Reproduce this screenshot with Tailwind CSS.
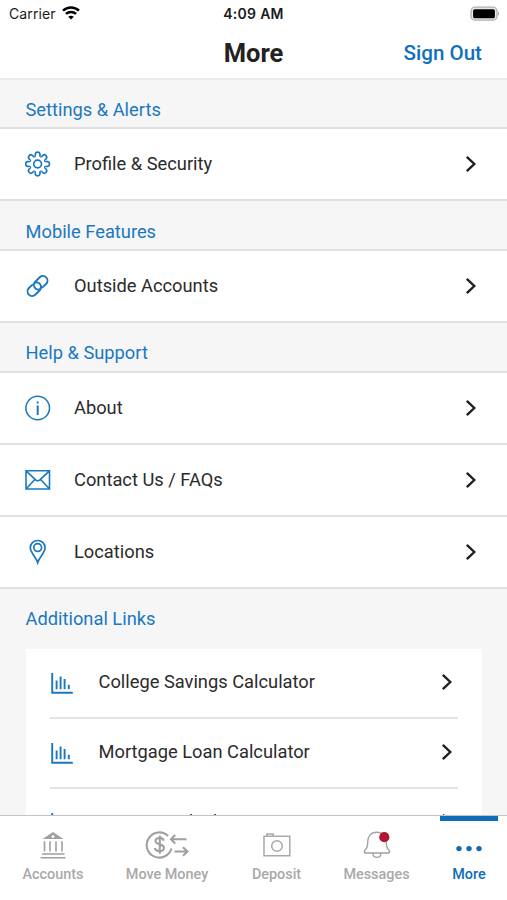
<!DOCTYPE html>
<html lang="en">
<head>
<meta charset="utf-8">
<title>More</title>
<script src="https://cdn.jsdelivr.net/npm/@tailwindcss/browser@4"></script>
</head>
<body class="w-[507px] h-[900px] overflow-hidden bg-[#f6f6f6] font-['Roboto',sans-serif] text-[#2b2b2b]">
<svg class="hidden">
  <symbol id="chev" viewBox="0 0 12 18"><path d="M1.8 1.8 9.3 9 1.8 16.2" fill="none" stroke="#202020" stroke-width="2.4"/></symbol>
  <symbol id="chart" viewBox="0 0 24 24"><path d="M2.2 1v19.8h20.6M6.6 8.6V17.2M10.6 4.4V17.2M14.6 7V17.2M18.8 12.8v4.4" fill="none" stroke="#1a78c0" stroke-width="1.9"/></symbol>
</svg>
<div class="flex h-full flex-col">
  <header class="h-[80px] shrink-0 border-b-2 border-[#ebebeb] bg-white">
    <div class="grid h-7 grid-cols-3 items-center pl-[9px] pr-[7px] font-['Inter',sans-serif] text-[14px] text-[#1a1a1a]">
      <div class="-mt-px flex items-center gap-[6px]"><span class="w-[47px] tracking-[0.1px]">Carrier</span>
        <svg class="-mt-[2px] h-[14px] w-[18px]" viewBox="0 0 18 14" fill="none" stroke="#000" stroke-width="2.5"><path d="M1 4.7C5.5.4 12.5.4 17 4.7"/><path d="M3.9 7.9C6.8 5.2 11.2 5.2 14.1 7.9"/><path d="M9 13.6 6.2 10.8Q9 8.5 11.8 10.8Z" fill="#000" stroke="none"/></svg>
      </div>
      <span class="-ml-[2px] -mt-[1px] text-center font-semibold tracking-[0.3px]">4:09 AM</span>
      <svg class="-mt-[1px] h-4 w-[31px] justify-self-end" viewBox="0 0 31 16"><rect x="2" y="1.2" width="26" height="13" rx="4" fill="#e8e8e8" stroke="#b0b0b0" stroke-width="1.3"/><rect x="4.1" y="3.2" width="21.8" height="9" rx="1.5"/><path d="M29 5.3q2 2.4 0 4.8z" fill="#aaa"/></svg>
    </div>
    <div class="grid h-[50px] grid-cols-3 items-center px-[25px]">
      <span></span>
      <h1 class="text-center text-[25.5px] font-bold text-[#222]">More</h1>
      <a class="text-right text-[20.6px] font-medium text-[#0f70bd]">Sign Out</a>
    </div>
  </header>
  <main class="min-h-0 flex-1 overflow-hidden text-[18.3px]">
    <h2 class="h-[49px] border-b-2 border-[#e0e0e0] pl-[25.5px] pt-[12px] leading-[36px] text-[#1a78c0]">Settings &amp; Alerts</h2>
    <div class="flex h-[72px] items-center border-b-2 border-[#e0e0e0] bg-white pl-[25px] pr-[30px]">
      <svg class="h-[26px] w-[26px]" viewBox="-12.6 -13 26 26" fill="none" stroke="#1a78c0" stroke-width="1.7"><circle r="3.9"/>
        <g><path id="t" d="M-3.1-7.5C-2.3-7.2-2.4-8.8-2.3-10.2C-2.1-11.6-1.2-11.9 0-11.9C1.2-11.9 2.1-11.6 2.3-10.2C2.4-8.8 2.3-7.2 3.1-7.5"/><use href="#t" transform="rotate(45)"/><use href="#t" transform="rotate(90)"/><use href="#t" transform="rotate(135)"/><use href="#t" transform="rotate(180)"/><use href="#t" transform="rotate(225)"/><use href="#t" transform="rotate(270)"/><use href="#t" transform="rotate(315)"/></g></svg>
      <span class="ml-[23px] flex-1">Profile &amp; Security</span><svg class="h-[18px] w-3"><use href="#chev"/></svg>
    </div>
    <h2 class="h-[50px] border-b-2 border-[#e0e0e0] pl-[25.5px] pt-[12px] leading-[37px] text-[#1a78c0]">Mobile Features</h2>
    <div class="flex h-[72px] items-center border-b-2 border-[#e0e0e0] bg-white pl-[25px] pr-[30px]">
      <svg class="h-[26px] w-[26px]" viewBox="0 0 26 26" fill="none" stroke="#1a78c0" stroke-width="1.9" stroke-linecap="round"><path id="lk" d="M14.3 16.5A4.6 4.6 0 0 1 10.25 8.75L14.75 4.25A4.6 4.6 0 0 1 21.25 10.75L17.8 14.2"/><use href="#lk" transform="rotate(180 12.5 13)"/></svg>
      <span class="ml-[23px] flex-1">Outside Accounts</span><svg class="h-[18px] w-3"><use href="#chev"/></svg>
    </div>
    <h2 class="h-[50px] border-b-2 border-[#e0e0e0] pl-[25.5px] pt-[12px] leading-[36px] text-[#1a78c0]">Help &amp; Support</h2>
    <div class="flex h-[72px] items-center border-b-2 border-[#e0e0e0] bg-white pl-[25px] pr-[30px]">
      <svg class="h-[26px] w-[26px]" viewBox="0 0 26 26" fill="none" stroke="#1a78c0" stroke-width="1.5"><circle cx="12.7" cy="13" r="11.8"/><path d="M12.7 10.5v9.5M12.7 6.5v2" stroke-width="2"/></svg>
      <span class="ml-[23px] flex-1">About</span><svg class="h-[18px] w-3"><use href="#chev"/></svg>
    </div>
    <div class="flex h-[72px] items-center border-b-2 border-[#e0e0e0] bg-white pl-[25px] pr-[30px]">
      <svg class="h-[26px] w-[26px]" viewBox="0 0 26 26" fill="none" stroke="#1a78c0" stroke-width="1.6"><path d="M1 3.8H24.5V22H1ZM1 3.8 10.9 13.2Q12.7 14.5 14.6 13.2L24.5 3.8M1 22 9.8 12.5M24.5 22 15.7 12.5"/></svg>
      <span class="ml-[23px] flex-1">Contact Us / FAQs</span><svg class="h-[18px] w-3"><use href="#chev"/></svg>
    </div>
    <div class="flex h-[72px] items-center border-b-2 border-[#e0e0e0] bg-white pl-[25px] pr-[30px]">
      <svg class="h-[26px] w-[26px]" viewBox="0 0 26 26" fill="none" stroke="#1a78c0" stroke-width="1.7"><path d="M12.7 23.5C11.5 19 5.3 13.5 5.3 8.8C5.3 4.5 8.5 1.5 12.7 1.5S20.1 4.5 20.1 8.8C20.1 13.5 13.9 19 12.7 23.5Z"/><circle cx="12.7" cy="8.6" r="3.9"/></svg>
      <span class="ml-[23px] flex-1">Locations</span><svg class="h-[18px] w-3"><use href="#chev"/></svg>
    </div>
    <h2 class="h-[60px] pl-[25.5px] pt-[12px] leading-[36px] text-[#1a78c0]">Additional Links</h2>
    <div class="ml-[25.5px] mr-[25px] bg-white px-6">
      <div class="flex h-[70px] items-center border-b-2 border-[#e4e4e4] pb-[2px] pr-[5px]"><svg class="mt-[4px] h-6 w-6"><use href="#chart"/></svg><span class="ml-[25px] flex-1">College Savings Calculator</span><svg class="h-[18px] w-3"><use href="#chev"/></svg></div>
      <div class="flex h-[70px] items-center border-b-2 border-[#e4e4e4] pb-[2px] pr-[5px]"><svg class="mt-[4px] h-6 w-6"><use href="#chart"/></svg><span class="ml-[25px] flex-1">Mortgage Loan Calculator</span><svg class="h-[18px] w-3"><use href="#chev"/></svg></div>
      <div class="flex h-[70px] items-center border-b-2 border-[#e4e4e4] pb-[2px] pr-[5px]"><svg class="mt-[4px] h-6 w-6"><use href="#chart"/></svg><span class="ml-[25px] flex-1">Savings Calculator</span><svg class="h-[18px] w-3"><use href="#chev"/></svg></div>
    </div>
  </main>
  <nav class="flex h-[85px] shrink-0 border-t border-[#c4c4c4] bg-white pl-[1px] pr-[9px] text-[14.4px] font-medium text-[#a9a9a9]">
    <div class="flex w-[104px] flex-col items-center pt-[14px]">
      <svg class="h-[30px] w-[30px]" viewBox="0 0 30 30" fill="none" stroke="#a0a0a0" stroke-width="1.6"><path d="M4.5 9 15 2 25.5 9Z" fill="#a0a0a0" stroke="none"/><circle cx="15" cy="6.6" r="1.4" fill="#fff" stroke="none"/><path d="M6.5 11.3V21.5M12 11.3V21.5M18 11.3V21.5M24 11.3V21.5M4 24H26.5M2.5 27.8H27.5" /></svg>
      <span class="mt-[5px] leading-5">Accounts</span>
    </div>
    <div class="flex w-[124px] flex-col items-center pt-[14px]">
      <svg class="h-[30px] w-[44px]" viewBox="0 0 44 30" fill="none" stroke="#a0a0a0" stroke-width="2.1"><path d="M23.1 6A12.6 12.6 0 1 0 26.4 18.5" /><path d="M18.7 10.7C17.8 6.8 10.3 7 10.5 11.3C10.8 15.5 19 13.2 19 18C19 22.2 10.7 22 9.9 18M14.8 5.5V23.7M26 9.2H41.5M30.2 5 26 9.2 30.2 13.4M29.5 21.5H43M38 17.3 42.5 21.5 38 25.7"/></svg>
      <span class="mt-[5px] leading-5">Move Money</span>
    </div>
    <div class="flex w-[95px] flex-col items-center pt-[14px]">
      <svg class="h-[30px] w-[30px]" viewBox="0 0 30 30" fill="none" stroke="#a9a9a9" stroke-width="1.5"><path d="M2 6.3H27.8V25.8H2ZM4.8 6V4H11.2V6"/><circle cx="15" cy="16" r="5.3"/></svg>
      <span class="mt-[5px] leading-5">Deposit</span>
    </div>
    <div class="flex w-[105px] flex-col items-center pt-[14px]">
      <svg class="h-[30px] w-[30px]" viewBox="0 0 30 30" fill="none" stroke="#a0a0a0" stroke-width="1.4"><path d="M14.8 2.2C9 2.2 5.9 6.2 5.8 11.4C5.7 16.4 5.3 17.9 3.2 19.9C1.7 21.4 2.2 23 3.7 23H26.2C27.7 23 28.2 21.4 26.7 19.9C24.6 17.9 24.2 16.4 24.1 11.4C24 6.2 20.6 2.2 14.8 2.2ZM10.9 23.2C11.2 28.8 18.7 28.8 19 23.2"/><circle cx="22.3" cy="7.2" r="5.1" fill="#ae1733" stroke="none"/></svg>
      <span class="mt-[5px] leading-5">Messages</span>
    </div>
    <div class="ml-auto flex w-[58px] flex-col items-center border-t-[5px] border-[#0f6cb8] pt-[9px] text-[#0f6cb8]">
      <svg class="h-[30px] w-[30px]" viewBox="0 0 30 30" fill="#0f6cb8"><circle cx="5" cy="18.6" r="2.7"/><circle cx="15" cy="18.6" r="2.7"/><circle cx="25" cy="18.6" r="2.7"/></svg>
      <span class="mt-[5px] leading-5">More</span>
    </div>
  </nav>
</div>
</body>
</html>
